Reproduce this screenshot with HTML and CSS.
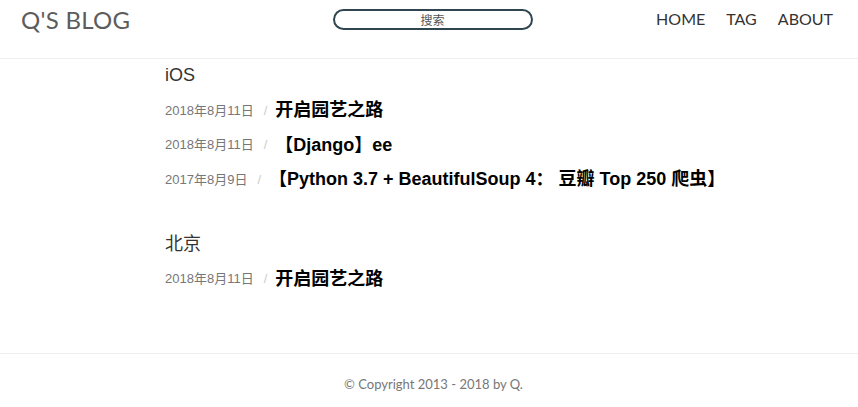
FILE: index.html
```html
<!DOCTYPE html>
<html lang="zh">
<head>
<meta charset="utf-8">
<title>Q's Blog</title>
<link rel="stylesheet" href="styles.css">
</head>
<body>
<header class="header">
  <div class="logo">Q'S BLOG</div>
  <div class="search"><input class="search-input" type="text" placeholder="搜索"></div>
  <nav class="nav">
    <a class="nav-link" href="#">HOME</a>
    <a class="nav-link" href="#">TAG</a>
    <a class="nav-link" href="#">ABOUT</a>
  </nav>
</header>
<main class="main">
  <section class="group">
    <h2 class="group-title">iOS</h2>
    <ul class="posts">
      <li class="post"><span class="date">2018年8月11日</span><span class="sep">/</span><a class="title" href="#">开启园艺之路</a></li>
      <li class="post"><span class="date">2018年8月11日</span><span class="sep">/</span><a class="title" href="#">【Django】ee</a></li>
      <li class="post"><span class="date">2017年8月9日</span><span class="sep">/</span><a class="title" href="#">【Python 3.7 + BeautifulSoup 4： 豆瓣 Top 250 爬虫】</a></li>
    </ul>
  </section>
  <section class="group">
    <h2 class="group-title">北京</h2>
    <ul class="posts">
      <li class="post"><span class="date">2018年8月11日</span><span class="sep">/</span><a class="title" href="#">开启园艺之路</a></li>
    </ul>
  </section>
</main>
<footer class="footer">© Copyright 2013 - 2018 by Q.</footer>
</body>
</html>
```
FILE: styles.css
```css
* { box-sizing: border-box; }
html, body { margin: 0; padding: 0; background: #fff; }
body { font-family: "Liberation Sans", "Noto Sans CJK SC", sans-serif; }
.header {
  height: 59px;
  border-bottom: 1px solid #f0f0f0;
  display: flex;
  align-items: center;
  padding: 0 25px 20px 21px;
  justify-content: space-between;
}
.logo {
  font-family: Lato, sans-serif;
  font-size: 24px;
  color: #5c5c5c;
  letter-spacing: 0.3px;
  width: 311px;
}
.search { width: 200px; }
.search-input {
  display: block;
  width: 200px;
  height: 21px;
  border: 2px solid #2f4651;
  border-radius: 11px;
  text-align: center;
  font-family: "Noto Sans CJK SC", sans-serif;
  font-size: 12px;
  padding: 0;
  outline: none;
}
.search-input::placeholder { color: #555; }
.nav { display: flex; gap: 21px; width: 300px; justify-content: flex-end; margin-bottom: 2px; }
.nav-link {
  font-family: Lato, sans-serif;
  font-size: 16px;
  color: #333;
  text-decoration: none;
}
.main { padding-left: 165px; height: 294px; }
.group { margin-bottom: 31px; }
.group:last-child { margin-bottom: 0; }
.group-title {
  margin: 0;
  font-weight: normal;
  font-size: 18px;
  line-height: 32px;
  height: 32px;
  color: #333;
}
.posts { list-style: none; margin: 0; padding: 2px 0 0; }
.post { height: 34.5px; display: flex; align-items: center; white-space: nowrap; }
.date { font-size: 13px; color: #777; line-height: 1; }
.sep { font-size: 13px; color: #ccc; margin: 0 8px 0 10px; line-height: 1; }
.title { font-size: 18px; font-weight: bold; color: #000; text-decoration: none; line-height: 1; }
.footer {
  border-top: 1px solid #eee;
  height: 54px;
  padding: 22px 0 0 9px;
  text-align: center;
  font-family: Lato, sans-serif;
  font-size: 13px;
  color: #777;
}
```
